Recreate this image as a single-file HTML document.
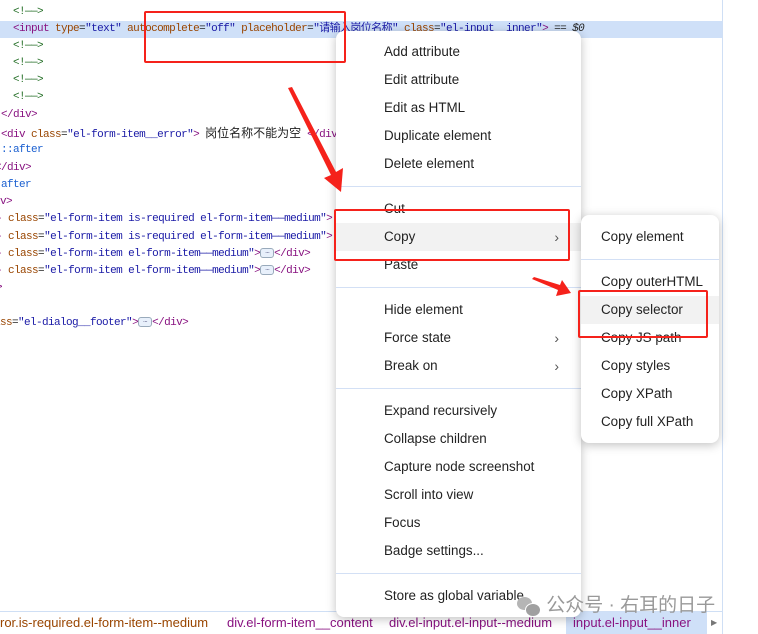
<!DOCTYPE html>
<html><head><meta charset="utf-8"><style>
html,body{margin:0;padding:0;width:758px;height:634px;overflow:hidden;background:#fff;position:relative}
.code{position:absolute;left:0;top:0;font-family:"Liberation Mono","Noto Sans CJK SC",monospace;font-size:11px;letter-spacing:-0.6px;white-space:pre;color:#222}
.l{position:absolute;height:17px;line-height:17px}
.t{color:#881280}.a{color:#994500}.v{color:#1a1aa6}.c{color:#236e25}.p{color:#1a5fd0}
.cj{font-family:"Liberation Sans","Noto Sans CJK SC",sans-serif;font-size:12px;color:#222;letter-spacing:0}
.dots{display:inline-block;width:12px;height:8px;border:1px solid #9ab;border-radius:3px;background:#e8f0fb;vertical-align:middle;font-size:7px;line-height:6px;text-align:center;color:#336}
.menu{position:absolute;background:#fff;border-radius:8px;box-shadow:0 2px 10px rgba(0,0,0,.25);font-family:"Liberation Sans","Noto Sans CJK SC",sans-serif;font-size:13.4px;color:#222}
.it{position:absolute;left:0;right:0;height:28px;line-height:28px}
.sep{position:absolute;left:0;right:0;height:1px;background:#d3e0f5}
.arr{position:absolute;right:22px;color:#555;font-size:14px}
.red{position:absolute;border:2.5px solid #f5221b;border-radius:2px}
.bar{position:absolute;left:0;top:611px;width:722px;height:23px;border-top:1px solid #cfdff5;font-family:"Liberation Sans",sans-serif;font-size:13px;line-height:22px;white-space:nowrap}
.bar span{position:absolute;top:0}
</style></head><body>
<div style="position:absolute;left:0;top:21px;width:722px;height:17px;background:#cfe0f8"></div>
<div style="position:absolute;left:722px;top:0;width:1px;height:634px;background:#cfdff5"></div>
<div class="code">
<div class="l" style="top:4px;left:13px"><span class="c">&lt;!——&gt;</span></div>
<div class="l" style="top:21px;left:13px"><span class="t">&lt;input</span> <span class="a">type</span>=<span class="v">"text"</span> <span class="a">autocomplete</span>=<span class="v">"off"</span> <span class="a">placeholder</span>=<span class="v">"请输入岗位名称"</span> <span class="a">class</span>=<span class="v">"el-input__inner"</span><span class="t">&gt;</span> == <i>$0</i></div>
<div class="l" style="top:38px;left:13px"><span class="c">&lt;!——&gt;</span></div>
<div class="l" style="top:55px;left:13px"><span class="c">&lt;!——&gt;</span></div>
<div class="l" style="top:72px;left:13px"><span class="c">&lt;!——&gt;</span></div>
<div class="l" style="top:89px;left:13px"><span class="c">&lt;!——&gt;</span></div>
<div class="l" style="top:107px;left:1px"><span class="t">&lt;/div&gt;</span></div>
<div class="l" style="top:125px;left:1px"><span class="t">&lt;div</span> <span class="a">class</span>=<span class="v">"el-form-item__error"</span><span class="t">&gt;</span> <span class="cj">岗位名称不能为空</span> <span class="t">&lt;/div</span></div>
<div class="l" style="top:142px;left:1px"><span class="p">::after</span></div>
<div class="l" style="top:160px;left:-5px"><span class="t">&lt;/div&gt;</span></div>
<div class="l" style="top:177px;left:1px"><span class="p">after</span></div>
<div class="l" style="top:194px;left:-6px"><span class="t">iv&gt;</span></div>
<div class="l" style="top:211px;left:-4px"><span class="t">-</span> <span class="a">class</span>=<span class="v">"el-form-item is-required el-form-item——medium"</span><span class="t">&gt;</span></div>
<div class="l" style="top:229px;left:-4px"><span class="t">-</span> <span class="a">class</span>=<span class="v">"el-form-item is-required el-form-item——medium"</span><span class="t">&gt;</span></div>
<div class="l" style="top:246px;left:-4px"><span class="t">-</span> <span class="a">class</span>=<span class="v">"el-form-item el-form-item——medium"</span><span class="t">&gt;</span><span class="dots">…</span><span class="t">&lt;/div&gt;</span></div>
<div class="l" style="top:263px;left:-4px"><span class="t">-</span> <span class="a">class</span>=<span class="v">"el-form-item el-form-item——medium"</span><span class="t">&gt;</span><span class="dots">…</span><span class="t">&lt;/div&gt;</span></div>
<div class="l" style="top:280px;left:-4px"><span class="t">&gt;</span></div>
<div class="l" style="top:315px;left:-6px"><span class="a">ass</span>=<span class="v">"el-dialog__footer"</span><span class="t">&gt;</span><span class="dots">…</span><span class="t">&lt;/div&gt;</span></div>
</div>

<div class="bar"><span style="color:#994500;left:0">ror.is-required.el-form-item--medium</span><span style="color:#881280;left:227px">div.el-form-item__content</span><span style="color:#881280;left:389px">div.el-input.el-input--medium</span><span style="color:#881280;background:#cfe0f8;left:566px;width:141px;padding-left:7px;box-sizing:border-box">input.el-input__inner</span><span style="color:#777;left:711px;font-size:8px">▶</span></div>

<div class="menu" style="left:336px;top:31px;width:245px;height:586px">
<div class="it" style="top:7px;padding-left:48px">Add attribute</div>
<div class="it" style="top:35px;padding-left:48px">Edit attribute</div>
<div class="it" style="top:63px;padding-left:48px">Edit as HTML</div>
<div class="it" style="top:91px;padding-left:48px">Duplicate element</div>
<div class="it" style="top:119px;padding-left:48px">Delete element</div>
<div class="sep" style="top:155px"></div>
<div class="it" style="top:164px;padding-left:48px">Cut</div>
<div class="it" style="top:192px;padding-left:48px;background:#f2f2f2">Copy<span class="arr">›</span></div>
<div class="it" style="top:220px;padding-left:48px">Paste</div>
<div class="sep" style="top:256px"></div>
<div class="it" style="top:265px;padding-left:48px">Hide element</div>
<div class="it" style="top:293px;padding-left:48px">Force state<span class="arr">›</span></div>
<div class="it" style="top:321px;padding-left:48px">Break on<span class="arr">›</span></div>
<div class="sep" style="top:357px"></div>
<div class="it" style="top:366px;padding-left:48px">Expand recursively</div>
<div class="it" style="top:394px;padding-left:48px">Collapse children</div>
<div class="it" style="top:422px;padding-left:48px">Capture node screenshot</div>
<div class="it" style="top:450px;padding-left:48px">Scroll into view</div>
<div class="it" style="top:478px;padding-left:48px">Focus</div>
<div class="it" style="top:506px;padding-left:48px">Badge settings...</div>
<div class="sep" style="top:542px"></div>
<div class="it" style="top:551px;padding-left:48px">Store as global variable</div>
</div>

<div class="menu" style="left:581px;top:215px;width:138px;height:228px">
<div class="it" style="top:8px;padding-left:20px">Copy element</div>
<div class="sep" style="top:44px"></div>
<div class="it" style="top:53px;padding-left:20px">Copy outerHTML</div>
<div class="it" style="top:81px;padding-left:20px;background:#f2f2f2">Copy selector</div>
<div class="it" style="top:109px;padding-left:20px">Copy JS path</div>
<div class="it" style="top:137px;padding-left:20px">Copy styles</div>
<div class="it" style="top:165px;padding-left:20px">Copy XPath</div>
<div class="it" style="top:193px;padding-left:20px">Copy full XPath</div>
</div>

<div class="red" style="left:144px;top:11px;width:198px;height:48px"></div>
<div class="red" style="left:334px;top:209px;width:232px;height:48px"></div>
<div class="red" style="left:578px;top:290px;width:126px;height:44px"></div>

<svg style="position:absolute;left:0;top:0" width="758" height="634">
<polygon points="288,88 292,87 336,172 343,168 341,192 324,178 331,175" fill="#f5221b"/>
<polygon points="532,279 534,277 560,285 562,280 571,293 556,296 558,290" fill="#f5221b"/>
</svg>

<div style="position:absolute;left:515px;top:590px;font-family:'Liberation Sans','Noto Sans CJK SC',sans-serif;font-size:19px;color:#999;white-space:nowrap"><span style="display:inline-block;width:26px;height:22px;vertical-align:middle;position:relative"><span style="position:absolute;left:2px;top:2px;width:15px;height:13px;border-radius:50%;background:#b5b5b5"></span><span style="position:absolute;left:10px;top:8px;width:14px;height:12px;border-radius:50%;background:#a0a0a0;border:1px solid #fff"></span></span> 公众号 · 右耳的日子</div>
</body></html>
